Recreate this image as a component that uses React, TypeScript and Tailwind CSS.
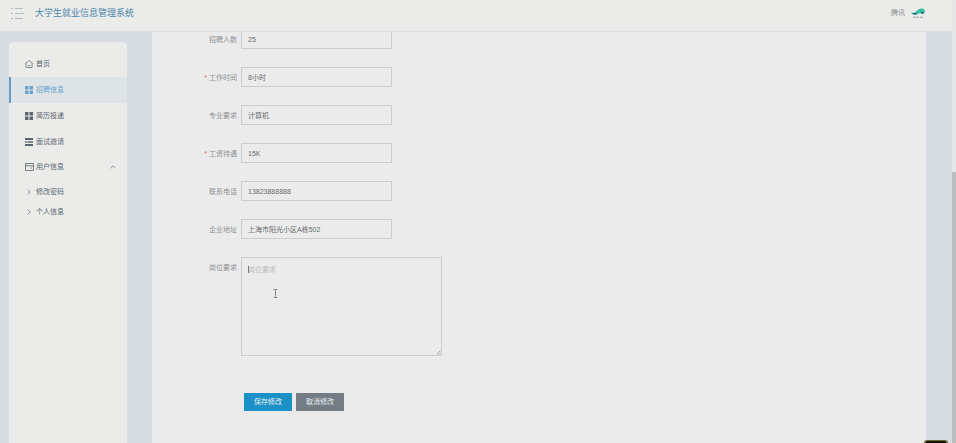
import { ReactNode } from 'react';

const GridIcon = () => (
  <svg viewBox="0 0 8 8" className="h-2 w-2 shrink-0" fill="currentColor">
    <rect width="3.5" height="3.5" />
    <rect x="4.5" width="3.5" height="3.5" />
    <rect y="4.5" width="3.5" height="3.5" />
    <rect x="4.5" y="4.5" width="3.5" height="3.5" />
  </svg>
);

const HomeIcon = () => (
  <svg viewBox="0 0 8 8" className="h-2 w-2 shrink-0" fill="none" stroke="currentColor" strokeWidth="0.7">
    <path d="M0.9 7.5V3L4 0.5 7.1 3v4.5z M0.3 3.6L0.9 3 M7.7 3.6L7.1 3 M2.6 5.4q1.4 1 2.8 0" />
  </svg>
);

const ListIcon = () => (
  <svg viewBox="0 0 8 8" className="h-2 w-2 shrink-0" stroke="currentColor">
    <path d="M0 1h8M0 7h8" strokeWidth="1.8" />
    <path d="M0 4h1.6M2.4 4H8" strokeWidth="1.6" />
  </svg>
);

const CardIcon = () => (
  <svg viewBox="0 0 9 8" className="h-2 w-[9px] shrink-0" fill="none" stroke="currentColor" strokeWidth="0.8">
    <path d="M0.5 0.5h8v7h-8z M0.5 2.8h8 M5.5 5h1.6" />
  </svg>
);

const ArrowIcon = () => (
  <svg viewBox="0 0 6 6" className="h-[6px] w-[6px] shrink-0" fill="none" stroke="currentColor" strokeWidth="0.7">
    <path d="M1.8 0.6L4.2 3 1.8 5.4" />
  </svg>
);

const Logo = () => (
  <svg viewBox="0 0 14 11" className="h-[11px] w-[14px]">
    <path d="M0.2 4.2C2 5.6 4 5 5.6 3 7.4 0.8 10 0 12.2 0.8c1.8.8 2 2.8 1 4.4-.8-1.6-2.6-2-4-.8C7.2 6.8 3 8 0.2 4.2z" fill="#35bfa5" />
    <path d="M0.2 4.2C2.2 5.8 4 5.4 5.8 4L5 6.6C3 7 1 6.2 0.2 4.2z" fill="#176f78" />
    <path d="M8.8 4.8c1.4-1.4 3.2-1.2 4.6 0l-1.6 1.4z" fill="#237784" />
    <path d="M2 9.2h3M6 9.2h2M9 9.2h3" stroke="#8ba5a6" strokeWidth="1" />
    <path d="M5.5 9.2h1.2" stroke="#c78b86" strokeWidth="1" />
  </svg>
);

interface MenuItem {
  label: string;
  icon: ReactNode;
  active?: boolean;
}

const menu: MenuItem[] = [
  { label: '首页', icon: <HomeIcon /> },
  { label: '招聘信息', icon: <GridIcon />, active: true },
  { label: '简历投递', icon: <GridIcon /> },
  { label: '面试邀请', icon: <ListIcon /> },
];

const subMenu = ['修改密码', '个人信息'];

const fields = [
  { id: 'count', label: '招聘人数', value: '25' },
  { id: 'hours', label: '工作时间', value: '8小时', required: true },
  { id: 'major', label: '专业要求', value: '计算机' },
  { id: 'salary', label: '工资待遇', value: '15K', required: true },
  { id: 'phone', label: '联系电话', value: '13823888888' },
  { id: 'address', label: '企业地址', value: '上海市阳光小区A栋502' },
];

const Header = () => (
  <header className="flex h-8 shrink-0 items-center justify-between border-b border-[#dcdfe1] bg-[#ebebea] pb-[5px] pr-[27px] pl-[11px]">
    <div className="flex items-center gap-[11px]">
      <button type="button" aria-label="菜单" className="text-[#b3bac2]">
        <svg viewBox="0 0 13 11" className="h-[11px] w-[13px]" stroke="currentColor" strokeWidth="1">
          <path d="M0 0.5h2M4 0.5h8M0 5.5h2M4 5.5h9M0 10.5h2M4 10.5h8" />
        </svg>
      </button>
      <h1 className="text-[9px] leading-3 text-[#4a87a8]">大学生就业信息管理系统</h1>
    </div>
    <div className="flex items-center gap-[6px] text-[7px] text-[#8b8e90]">
      <span>腾讯</span>
      <Logo />
    </div>
  </header>
);

const Sidebar = () => (
  <nav className="mt-[10px] w-[118px] shrink-0 rounded-t-sm bg-[#ebecea] pt-[9px] text-[7px] text-[#5a656d]">
    {menu.map((item) => (
      <a
        key={item.label}
        href="#"
        className={
          item.active
            ? 'flex h-[26px] items-center gap-[3px] border-l-2 border-[#5c9bd0] bg-[#dee4e5] pl-[14px] text-[#6aa3d0]'
            : 'flex h-[26px] items-center gap-[3px] border-l-2 border-transparent pl-[14px]'
        }
      >
        {item.icon}
        {item.label}
      </a>
    ))}
    <button type="button" className="flex h-6 w-full items-center gap-[2px] pr-[11px] pl-4">
      <CardIcon />
      用户信息
      <svg viewBox="0 0 6 4" className="ml-auto h-1 w-[6px]" fill="none" stroke="currentColor" strokeWidth="0.6">
        <path d="M0.4 3.4L3 0.8l2.6 2.6" />
      </svg>
    </button>
    <div className="pt-[3px]">
      {subMenu.map((label) => (
        <a key={label} href="#" className="flex h-5 items-center gap-1 pl-[17px]">
          <ArrowIcon />
          {label}
        </a>
      ))}
    </div>
  </nav>
);

const JobForm = () => (
  <form className="-mt-[3px] flex flex-col gap-[18px] pl-[42px] text-[7px] text-[#8f9193]">
    {fields.map((field) => (
      <div key={field.id} className="flex items-center gap-1">
        <label htmlFor={field.id} className="w-[43px] pt-[2px] text-right">
          {field.required && <span className="mr-[2px] text-[#e0655e]">*</span>}
          {field.label}
        </label>
        <input
          id={field.id}
          defaultValue={field.value}
          className="h-5 w-[151px] border border-[#cbcdcf] px-[6px] text-[#696b6d] outline-none"
        />
      </div>
    ))}
    <div className="flex items-start gap-1">
      <label htmlFor="requirement" className="w-[43px] pt-[5px] text-right leading-3">
        岗位要求
      </label>
      <div className="relative">
        <textarea
          id="requirement"
          placeholder="岗位要求"
          className="block h-[99px] w-[201px] resize-none border border-[#cbcdcf] px-[6px] py-[6px] leading-3 outline-none placeholder:text-[#b9bcbf]"
        />
        {/* text caret */}
        <span className="absolute top-[9px] left-[7px] h-[7px] w-px bg-[#777777]" />
        {/* mouse pointer */}
        <svg viewBox="0 0 5 9" className="absolute top-8 left-8 h-[9px] w-[5px]" fill="none" stroke="#777777" strokeWidth="0.8">
          <path d="M0.5 0.5h4M2.5 0.5v8M0.5 8.5h4" />
        </svg>
        <svg viewBox="0 0 5 5" className="absolute right-px bottom-px h-[5px] w-[5px]" stroke="#85878a" strokeWidth="0.7">
          <path d="M0.5 4.5l4-4M2.8 4.8l2-2" />
        </svg>
      </div>
    </div>
    <div className="mt-[19px] flex gap-1 pl-[50px] text-[#e9eff2]">
      <button type="button" className="h-[18px] w-12 bg-[#1b91c8]">
        保存修改
      </button>
      <button type="button" className="h-[18px] w-12 bg-[#737b84]">
        取消修改
      </button>
    </div>
  </form>
);

export default function App() {
  return (
    <div className="relative flex h-screen overflow-hidden bg-[#d7dbe2] font-['Liberation_Sans','Noto_Sans_CJK_SC',sans-serif]">
      <div className="flex min-w-0 flex-1 flex-col">
        <Header />
        <div className="flex min-h-0 flex-1 pr-[26px] pl-[9px]">
          <Sidebar />
          <main className="ml-[25px] min-w-0 flex-1 overflow-hidden bg-[#ebebeb]">
            <JobForm />
          </main>
        </div>
      </div>
      {/* page scrollbar */}
      <div className="flex w-1 flex-col bg-[#e6e6e6]">
        <div className="h-[172px]" />
        <div className="flex-1 bg-[#bdbdbd]" />
      </div>
      {/* floating widget at the window edge */}
      <div className="absolute right-2 bottom-0 h-[3px] w-6 rounded-t-sm border-x-2 border-t border-[#6f6d31] bg-[#151510]" />
    </div>
  );
}
